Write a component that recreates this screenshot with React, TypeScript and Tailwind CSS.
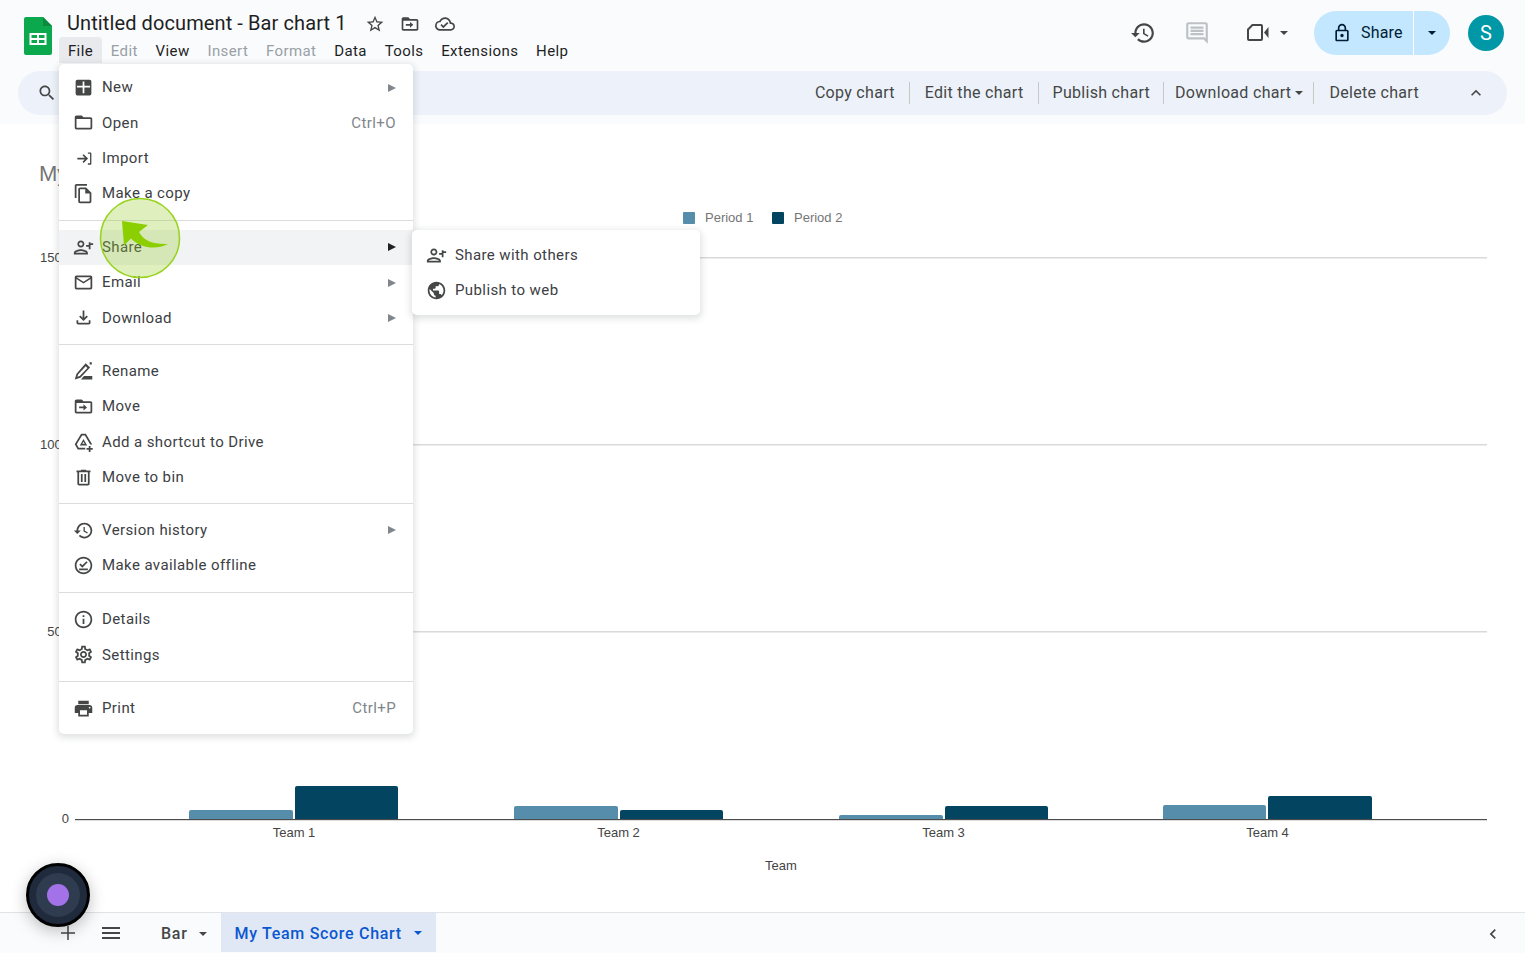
// ---------------------------------------------------------------------------
// Material icon paths
// ---------------------------------------------------------------------------

const ICONS = {
	search: "M15.5 14h-.79l-.28-.27C15.41 12.59 16 11.11 16 9.5 16 5.91 13.09 3 9.5 3S3 5.91 3 9.5 5.91 16 9.5 16c1.61 0 3.09-.59 4.23-1.57l.27.28v.79l5 4.99L20.49 19l-4.99-5zm-6 0C7.01 14 5 11.99 5 9.5S7.01 5 9.5 5 14 7.01 14 9.5 11.99 14 9.5 14z",
	star: "M22 9.24l-7.19-.62L12 2 9.19 8.63 2 9.24l5.46 4.73L5.82 21 12 17.27 18.18 21l-1.63-7.03L22 9.24zM12 15.4l-3.76 2.27 1-4.28-3.32-2.88 4.38-.38L12 6.1l1.71 4.04 4.38.38-3.32 2.88 1 4.28L12 15.4z",
	move: "M20 6h-8l-2-2H4c-1.1 0-1.99.9-1.99 2L2 18c0 1.1.9 2 2 2h16c1.1 0 2-.9 2-2V8c0-1.1-.9-2-2-2zm0 12H4V8h16v10zM7 12h5V9.5l4 3.5-4 3.5V14H7z",
	cloud: "M19.35 10.04C18.67 6.59 15.64 4 12 4 9.11 4 6.6 5.64 5.35 8.04 2.34 8.36 0 10.91 0 14c0 3.31 2.69 6 6 6h13c2.76 0 5-2.24 5-5 0-2.64-2.05-4.78-4.65-4.96zM19 18H6c-2.21 0-4-1.79-4-4 0-2.05 1.53-3.76 3.56-3.97l1.07-.11.5-.95C8.08 7.14 9.94 6 12 6c2.62 0 4.88 1.86 5.39 4.43l.3 1.5 1.53.11c1.56.1 2.78 1.41 2.78 2.96 0 1.65-1.35 3-3 3zm-9-3.82l-2.09-2.09L6.5 13.5 10 17l6.01-6.01-1.41-1.41z",
	history: "M13 3c-4.97 0-9 4.03-9 9H1l3.89 3.89.07.14L9 12H6c0-3.87 3.13-7 7-7s7 3.13 7 7-3.13 7-7 7c-1.93 0-3.68-.79-4.94-2.06l-1.42 1.42C8.27 19.99 10.51 21 13 21c4.97 0 9-4.03 9-9s-4.03-9-9-9zm-1 5v5l4.28 2.54.72-1.21-3.5-2.08V8H12z",
	comment: "M20 2H4c-1.1 0-2 .9-2 2v12c0 1.1.9 2 2 2h14l4 4V4c0-1.1-.9-2-2-2zm0 15.17L18.83 16H4V4h16v13.17zM6 12h12v2H6zm0-3h12v2H6zm0-3h12v2H6z",
	video: "M6 3h9a2 2 0 012 2v13a2 2 0 01-2 2H3a2 2 0 01-2-2V8zm.9 2L3 8.9V18h12V5zM18 11.5L22.5 6v11z",
	lock: "M18 8h-1V6c0-2.76-2.24-5-5-5S7 3.24 7 6v2H6c-1.1 0-2 .9-2 2v10c0 1.1.9 2 2 2h12c1.1 0 2-.9 2-2V10c0-1.1-.9-2-2-2zM9 6c0-1.66 1.34-3 3-3s3 1.34 3 3v2H9V6zm9 14H6V10h12v10zm-6-3c1.1 0 2-.9 2-2s-.9-2-2-2-2 .9-2 2 .9 2 2 2z",
	chevronUp: "M7.41 15.41L12 10.83l4.59 4.58L18 14l-6-6-6 6z",
	chevronLeft: "M15.41 7.41L14 6l-6 6 6 6 1.41-1.41L10.83 12z",
	plus: "M19 12.75h-6.25V19h-1.5v-6.25H5v-1.5h6.25V5h1.5v6.25H19z",
	menu: "M3 18h18v-2H3v2zm0-5h18v-2H3v2zm0-7v2h18V6H3z",
	new: "M5 3h14a2 2 0 012 2v14a2 2 0 01-2 2H5a2 2 0 01-2-2V5a2 2 0 012-2zM11 5v5H4.5v2H11v6.5h2V12h6.5v-2H13V5z",
	open: "M20 6h-8l-2-2H4c-1.1 0-1.99.9-1.99 2L2 18c0 1.1.9 2 2 2h16c1.1 0 2-.9 2-2V8c0-1.1-.9-2-2-2zm0 12H4V8h16v10z",
	import: "M5 11h8.5l-2.7-2.7L12.2 7l5 5-5 5-1.4-1.3 2.7-2.7H5zM17 5h3a1 1 0 011 1v12a1 1 0 01-1 1h-3v-1.5h2.5v-11H17z",
	copy: "M16 1H4c-1.1 0-2 .9-2 2v14h2V3h12V1zm-1 4H8c-1.1 0-1.99.9-1.99 2L6 21c0 1.1.89 2 1.99 2H19c1.1 0 2-.9 2-2V11l-6-6zM8 21V7h6v5h5v9H8z",
	person: "M9 12c2.21 0 4-1.79 4-4s-1.79-4-4-4-4 1.79-4 4 1.79 4 4 4zm0-6c1.1 0 2 .9 2 2s-.9 2-2 2-2-.9-2-2 .9-2 2-2zm0 8c-2.67 0-8 1.34-8 4v2h16v-2c0-2.66-5.33-4-8-4zm-6 4c.22-.72 3.31-2 6-2 2.7 0 5.8 1.29 6 2H3zm17-6v-3h3v-2h-3V6h-2v3h-3v2h3v3h2z",
	mail: "M20 4H4c-1.1 0-1.99.9-1.99 2L2 18c0 1.1.9 2 2 2h16c1.1 0 2-.9 2-2V6c0-1.1-.9-2-2-2zm0 14H4V8l8 5 8-5v10zm-8-7L4 6h16l-8 5z",
	download: "M18 15v3H6v-3H4v3c0 1.1.9 2 2 2h12c1.1 0 2-.9 2-2v-3h-2zm-1-4l-1.41-1.41L13 12.17V4h-2v8.17L8.41 9.59 7 11l5 5 5-5z",
	rename: "M14.5 2.5l5 5L8.5 19 2 21l2-6.500zm0 3.400L5.800 15.300l-.8 2.700 2.700-.800L16.500 7.900zM12.500 17H22v4H9zM19 1.500h2.500V4H19z",
	shortcut: "M9.3 3h5.4L22 15.5h-2.4L13.6 5h-3.2L4.3 15.2l2.2 4H14V21H5.4L2 15.2zM12 9l4.2 7.5H7.8zm0 3.3l-1.4 2.4h2.8zM18 17h2v2.5h2.5v2H20V24h-2v-2.5h-2.5v-2H18z",
	trash: "M15 4V3H9v1H4v2h1v13c0 1.1.9 2 2 2h10c1.1 0 2-.9 2-2V6h1V4h-5zm2 15H7V6h10v13zM9 8h2v9H9zm4 0h2v9h-2z",
	offline: "M12 2C6.48 2 2 6.48 2 12s4.48 10 10 10 10-4.48 10-10S17.52 2 12 2zm0 18c-4.41 0-8-3.59-8-8s3.59-8 8-8 8 3.59 8 8-3.59 8-8 8zm4.8-11.6L15.4 7l-4.7 4.7-2.1-2.1L7.2 11l3.5 3.5 6.1-6.1zM7 15.5h10v2H7z",
	info: "M11 7h2v2h-2zm0 4h2v6h-2zm1-9C6.48 2 2 6.48 2 12s4.48 10 10 10 10-4.48 10-10S17.52 2 12 2zm0 18c-4.41 0-8-3.59-8-8s3.59-8 8-8 8 3.59 8 8-3.59 8-8 8z",
	settings: "M19.43 12.98c.04-.32.07-.64.07-.98 0-.34-.03-.66-.07-.98l2.11-1.65c.19-.15.24-.42.12-.64l-2-3.46c-.09-.16-.26-.25-.44-.25-.06 0-.12.01-.17.03l-2.49 1c-.52-.4-1.08-.73-1.69-.98l-.38-2.65C14.46 2.18 14.25 2 14 2h-4c-.25 0-.46.18-.49.42l-.38 2.65c-.61.25-1.17.59-1.69.98l-2.49-1c-.06-.02-.12-.03-.18-.03-.17 0-.34.09-.43.25l-2 3.46c-.13.22-.07.49.12.64l2.11 1.65c-.04.32-.07.65-.07.98 0 .33.03.66.07.98l-2.11 1.65c-.19.15-.24.42-.12.64l2 3.46c.09.16.26.25.44.25.06 0 .12-.01.17-.03l2.49-1c.52.4 1.08.73 1.69.98l.38 2.65c.03.24.24.42.49.42h4c.25 0 .46-.18.49-.42l.38-2.65c.61-.25 1.17-.59 1.69-.98l2.49 1c.06.02.12.03.18.03.17 0 .34-.09.43-.25l2-3.46c.12-.22.07-.49-.12-.64l-2.11-1.65zm-1.98-1.71c.04.31.05.52.05.73 0 .21-.02.43-.05.73l-.14 1.13.89.7 1.08.84-.7 1.21-1.27-.51-1.04-.42-.9.68c-.43.32-.84.56-1.25.73l-1.06.43-.16 1.13-.2 1.35h-1.4l-.19-1.35-.16-1.13-1.06-.43c-.43-.18-.83-.41-1.23-.71l-.91-.7-1.06.43-1.27.51-.7-1.21 1.08-.84.89-.7-.14-1.13c-.03-.31-.05-.54-.05-.74s.02-.43.05-.73l.14-1.13-.89-.7-1.08-.84.7-1.21 1.27.51 1.04.42.9-.68c.43-.32.84-.56 1.25-.73l1.06-.43.16-1.13.2-1.35h1.39l.19 1.35.16 1.13 1.06.43c.43.18.83.41 1.23.71l.91.7 1.06-.43 1.27-.51.7 1.21-1.07.85-.89.7.14 1.13zM12 8c-2.21 0-4 1.79-4 4s1.79 4 4 4 4-1.79 4-4-1.79-4-4-4zm0 6c-1.1 0-2-.9-2-2s.9-2 2-2 2 .9 2 2-.9 2-2 2z",
	print: "M19 8H5c-1.66 0-3 1.34-3 3v6h4v4h12v-4h4v-6c0-1.66-1.34-3-3-3zm-3 11H8v-5h8v5zm3-7c-.55 0-1-.45-1-1s.45-1 1-1 1 .45 1 1-.45 1-1 1zm-1-9H6v4h12V3z",
	globe: "M12 2C6.48 2 2 6.48 2 12s4.48 10 10 10 10-4.48 10-10S17.52 2 12 2zm-1 17.93c-3.95-.49-7-3.85-7-7.93 0-.62.08-1.21.21-1.79L9 15v1c0 1.1.9 2 2 2v1.93zm6.9-2.54c-.26-.81-1-1.39-1.9-1.39h-1v-3c0-.55-.45-1-1-1H8v-2h2c.55 0 1-.45 1-1V7h2c1.1 0 2-.9 2-2v-.41c2.93 1.19 5 4.06 5 7.41 0 2.08-.8 3.97-2.1 5.39z",
};

function Icon({ d, className }: { d: string; className: string }) {
	return (
		<svg viewBox="0 0 24 24" className={className} fill="currentColor">
			<path d={d} />
		</svg>
	);
}

function Caret({ className }: { className: string }) {
	return (
		<svg viewBox="0 0 10 5" className={className} fill="currentColor">
			<path d="M0 0l5 5 5-5z" />
		</svg>
	);
}

// ---------------------------------------------------------------------------
// File menu
// ---------------------------------------------------------------------------

function MenuRow({
	icon,
	label,
	shortcut,
	arrow,
	active,
}: {
	icon: string;
	label: string;
	shortcut?: string;
	arrow?: boolean;
	active?: boolean;
}) {
	return (
		<div className={`flex h-[35.3px] items-center pl-[14px] pr-[17px] ${active ? "bg-[#f1f3f4]" : ""}`}>
			<Icon d={icon} className="mr-[8px] h-[21px] w-[21px] shrink-0 text-[#444746]" />
			<span className="flex-1 text-[15px] tracking-[0.4px] text-[#3c4043]">{label}</span>
			{shortcut && <span className="text-[15px] tracking-[0.4px] text-[#80868b]">{shortcut}</span>}
			{arrow && (
				<svg viewBox="0 0 8 8" className={`h-[8px] w-[8px] ${active ? "text-[#202124]" : "text-[#80868b]"}`} fill="currentColor">
					<path d="M0 0l8 4-8 4z" />
				</svg>
			)}
		</div>
	);
}

function Divider({ className }: { className: string }) {
	return (
		<div className={`flex items-center ${className}`}>
			<div className="h-px w-full bg-[#dadce0]" />
		</div>
	);
}

function FileMenu() {
	return (
		<div className="absolute left-[59px] top-[64px] w-[354px] rounded-[5px] bg-white pb-[8px] pt-[6px] shadow-[0_2px_6px_2px_rgba(60,64,67,0.15)]">
			<MenuRow icon={ICONS.new} label="New" arrow />
			<MenuRow icon={ICONS.open} label="Open" shortcut="Ctrl+O" />
			<MenuRow icon={ICONS.import} label="Import" />
			<MenuRow icon={ICONS.copy} label="Make a copy" />
			<Divider className="h-[18.5px]" />
			<MenuRow icon={ICONS.person} label="Share" arrow active />
			<MenuRow icon={ICONS.mail} label="Email" arrow />
			<MenuRow icon={ICONS.download} label="Download" arrow />
			<Divider className="h-[18px]" />
			<MenuRow icon={ICONS.rename} label="Rename" />
			<MenuRow icon={ICONS.move} label="Move" />
			<MenuRow icon={ICONS.shortcut} label="Add a shortcut to Drive" />
			<MenuRow icon={ICONS.trash} label="Move to bin" />
			<Divider className="h-[18px]" />
			<MenuRow icon={ICONS.history} label="Version history" arrow />
			<MenuRow icon={ICONS.offline} label="Make available offline" />
			<Divider className="h-[18.5px]" />
			<MenuRow icon={ICONS.info} label="Details" />
			<MenuRow icon={ICONS.settings} label="Settings" />
			<Divider className="h-[18.5px]" />
			<MenuRow icon={ICONS.print} label="Print" shortcut="Ctrl+P" />
		</div>
	);
}

function ShareSubmenu() {
	return (
		<div className="absolute left-[412px] top-[230px] w-[288px] rounded-[5px] bg-white pb-[6.5px] pt-[7.5px] shadow-[0_2px_6px_2px_rgba(60,64,67,0.15)]">
			<MenuRow icon={ICONS.person} label="Share with others" />
			<MenuRow icon={ICONS.globe} label="Publish to web" />
		</div>
	);
}

// ---------------------------------------------------------------------------
// Header
// ---------------------------------------------------------------------------

const MENU_ITEMS: { label: string; muted?: boolean; open?: boolean }[] = [
	{ label: "File", open: true },
	{ label: "Edit", muted: true },
	{ label: "View" },
	{ label: "Insert", muted: true },
	{ label: "Format", muted: true },
	{ label: "Data" },
	{ label: "Tools" },
	{ label: "Extensions" },
	{ label: "Help" },
];

function SheetsLogo() {
	return (
		<svg viewBox="0 0 28 38" className="h-[38px] w-[28px] shrink-0">
			<path d="M2 0h17l9 9v27a2 2 0 01-2 2H2a2 2 0 01-2-2V2a2 2 0 012-2z" fill="#0ca84e" />
			<path d="M19 0l9 9h-9z" fill="#0a8a3e" />
			<path d="M5.5 16h17v12h-17zm2 2v3h5.5v-3zm7.5 0v3h5.5v-3zm-7.5 5v3h5.5v-3zm7.5 0v3h5.5v-3z" fill="#fff" fillRule="evenodd" />
		</svg>
	);
}

function Separator() {
	return <span className="h-[22px] w-px bg-[#c7c7c7]" />;
}

function Header() {
	return (
		<header className="h-[124px] shrink-0 bg-[#f9fbfd]">
			<div className="flex h-[71px] items-start">
				<div className="ml-[24px] mt-[17px]">
					<SheetsLogo />
				</div>
				<div className="ml-[7px] mt-[10px] flex-1">
					<div className="ml-[8px] flex h-[27px] items-center">
						<span className="text-[20px] leading-[27px] tracking-[0.1px] text-[#1f1f1f]">Untitled document - Bar chart 1</span>
						<Icon d={ICONS.star} className="ml-[18px] h-[20px] w-[20px] text-[#444746]" />
						<Icon d={ICONS.move} className="ml-[15px] h-[20px] w-[20px] text-[#444746]" />
						<Icon d={ICONS.cloud} className="ml-[15px] h-[20px] w-[20px] text-[#444746]" />
					</div>
					<nav className="flex">
						{MENU_ITEMS.map((item) => (
							<span
								key={item.label}
								className={`flex h-[26px] items-center rounded-t-[4px] px-[8.9px] pt-[2px] text-[15px] tracking-[0.4px] ${item.open ? "bg-[#e8eaed]" : ""} ${item.muted ? "text-[#9aa0a6]" : "text-[#1f1f1f]"}`}
							>
								{item.label}
							</span>
						))}
					</nav>
				</div>
				<div className="mt-[11px] flex items-center">
					<Icon d={ICONS.history} className="h-[26px] w-[26px] text-[#444746]" />
					<Icon d={ICONS.comment} className="ml-[28px] h-[26px] w-[26px] text-[#bdc1c6]" />
					<Icon d={ICONS.video} className="ml-[36px] h-[24px] w-[24px] text-[#444746]" />
					<Caret className="ml-[10px] mr-[26px] h-[4px] w-[8px] text-[#444746]" />
					<div className="flex h-[44px] w-[136px] items-center rounded-full bg-[#c2e7ff] text-[#001d35]">
						<div className="flex h-full w-[100px] items-center border-r border-white pl-[18px]">
							<Icon d={ICONS.lock} className="h-[20px] w-[20px]" />
							<span className="ml-[9px] text-[16px] tracking-[0.2px]">Share</span>
						</div>
						<Caret className="ml-[14px] h-[4px] w-[8px]" />
					</div>
					<div className="ml-[18px] mr-[21px] flex h-[36px] w-[36px] items-center justify-center rounded-full bg-[#0097a7] text-[20px] text-white">S</div>
				</div>
			</div>
			<div className="mx-[18px] flex h-[44px] items-center rounded-full bg-[#edf2fa] text-[#444746]">
				<Icon d={ICONS.search} className="ml-[19px] h-[20px] w-[20px]" />
				<div className="ml-auto flex items-center text-[16px] tracking-[0.3px]">
					<span className="pr-[14px]">Copy chart</span>
					<Separator />
					<span className="pl-[15px] pr-[14px]">Edit the chart</span>
					<Separator />
					<span className="pl-[14px] pr-[13px]">Publish chart</span>
					<Separator />
					<span className="flex items-center pl-[11px] pr-[10px]">
						Download chart
						<Caret className="ml-[4px] h-[4px] w-[8px]" />
					</span>
					<Separator />
					<span className="pl-[15px]">Delete chart</span>
				</div>
				<Icon d={ICONS.chevronUp} className="ml-[47px] mr-[21px] h-[20px] w-[20px]" />
			</div>
		</header>
	);
}

// ---------------------------------------------------------------------------
// Chart (coordinates are page y - 124)
// ---------------------------------------------------------------------------

const BARS = [
	{ x: 189, w: 104, y: 686, fill: "#568dab" },
	{ x: 295, w: 103, y: 662, fill: "#034561" },
	{ x: 514, w: 104, y: 682, fill: "#568dab" },
	{ x: 620, w: 103, y: 686, fill: "#034561" },
	{ x: 839, w: 104, y: 691, fill: "#568dab" },
	{ x: 945, w: 103, y: 682, fill: "#034561" },
	{ x: 1163, w: 103, y: 681, fill: "#568dab" },
	{ x: 1268, w: 104, y: 672, fill: "#034561" },
];

const GRID = [
	{ y: 134, label: "1500" },
	{ y: 321, label: "1000" },
	{ y: 508, label: "500" },
];

const TEAMS = [
	{ x: 294, label: "Team 1" },
	{ x: 618.5, label: "Team 2" },
	{ x: 943.5, label: "Team 3" },
	{ x: 1267.5, label: "Team 4" },
];

function Chart() {
	return (
		<main className="min-h-0 flex-1 bg-white">
			<svg viewBox="0 0 1525 788" className="block h-[788px] w-[1525px] font-['Liberation_Sans',sans-serif] text-[13px]">
				<text x="39" y="57" fontSize="22" fill="#757575">My Team Score Chart</text>
				<rect x="683" y="88" width="12" height="12" rx="1" fill="#568dab" />
				<text x="705" y="98" fill="#757575">Period 1</text>
				<rect x="772" y="88" width="12" height="12" rx="1" fill="#034561" />
				<text x="794" y="98" fill="#757575">Period 2</text>
				{GRID.map((g) => (
					<g key={g.y}>
						<rect x="75" y={g.y - 1} width="1412" height="1.5" fill="#d9d9d9" />
						<text x="69" y={g.y + 4} textAnchor="end" fill="#444">{g.label}</text>
					</g>
				))}
				{BARS.map((b) => (
					<path key={b.x} d={`M${b.x} 695V${b.y + 2}a2 2 0 012-2H${b.x + b.w - 2}a2 2 0 012 2V695z`} fill={b.fill} />
				))}
				<rect x="75" y="695" width="1412" height="1.2" fill="#4d4d4d" />
				<text x="69" y="699" textAnchor="end" fill="#444">0</text>
				{TEAMS.map((t) => (
					<text key={t.label} x={t.x} y="713" textAnchor="middle" fill="#444">{t.label}</text>
				))}
				<text x="781" y="746" textAnchor="middle" fill="#444">Team</text>
			</svg>
		</main>
	);
}

// ---------------------------------------------------------------------------
// Bottom sheet tabs
// ---------------------------------------------------------------------------

function SheetBar() {
	return (
		<footer className="flex h-[41px] shrink-0 items-start border-t border-[#e1e3e6] bg-[#f9fbfd] text-[#444746]">
			<Icon d={ICONS.plus} className="ml-[56px] mt-[8px] h-[24px] w-[24px]" />
			<Icon d={ICONS.menu} className="ml-[19px] mt-[8px] h-[24px] w-[24px]" />
			<span className="ml-[38px] flex h-[39px] items-center pt-[2px] text-[16px] font-medium tracking-[0.7px]">Bar</span>
			<Caret className="ml-[12px] mt-[19px] h-[4px] w-[8px]" />
			<div className="ml-[14px] flex h-[39px] w-[215px] items-center bg-[#e1e8f5] pl-[13px] text-[#0b57d0]">
				<span className="pt-[2px] text-[16px] font-medium tracking-[0.7px]">My Team Score Chart</span>
				<Caret className="ml-[12px] h-[4px] w-[8px]" />
			</div>
			<Icon d={ICONS.chevronLeft} className="ml-auto mr-[22px] mt-[11px] h-[20px] w-[20px]" />
		</footer>
	);
}

// ---------------------------------------------------------------------------
// Overlays: click highlight and recorder button
// ---------------------------------------------------------------------------

function ClickMarker() {
	return (
		<svg viewBox="0 0 82 82" className="absolute left-[99px] top-[197px] h-[82px] w-[82px]">
			<circle cx="41" cy="41" r="39.5" fill="rgba(150,205,40,0.3)" stroke="#97d31b" strokeWidth="1.5" />
			<path d="M23 24l26 4-9 7c5 9 14 12.5 29 12-12 6-27 4.5-37-5.5l-7 7z" fill="#8ccf00" />
		</svg>
	);
}

function RecorderButton() {
	return (
		<div className="absolute left-[26px] top-[863px] flex h-[64px] w-[64px] items-center justify-center rounded-full border-[3px] border-black bg-[#1f2a3d] shadow-[0_4px_16px_rgba(0,0,0,0.25)]">
			<div className="flex h-[44px] w-[44px] items-center justify-center rounded-full bg-[#2f3b4e]">
				<div className="h-[22px] w-[22px] rounded-full bg-[#a472e8]" />
			</div>
		</div>
	);
}

export default function App() {
	return (
		<div className="relative flex h-[953px] w-full flex-col overflow-hidden bg-white font-[Roboto,sans-serif]">
			<Header />
			<Chart />
			<SheetBar />
			<FileMenu />
			<ShareSubmenu />
			<ClickMarker />
			<RecorderButton />
		</div>
	);
}
